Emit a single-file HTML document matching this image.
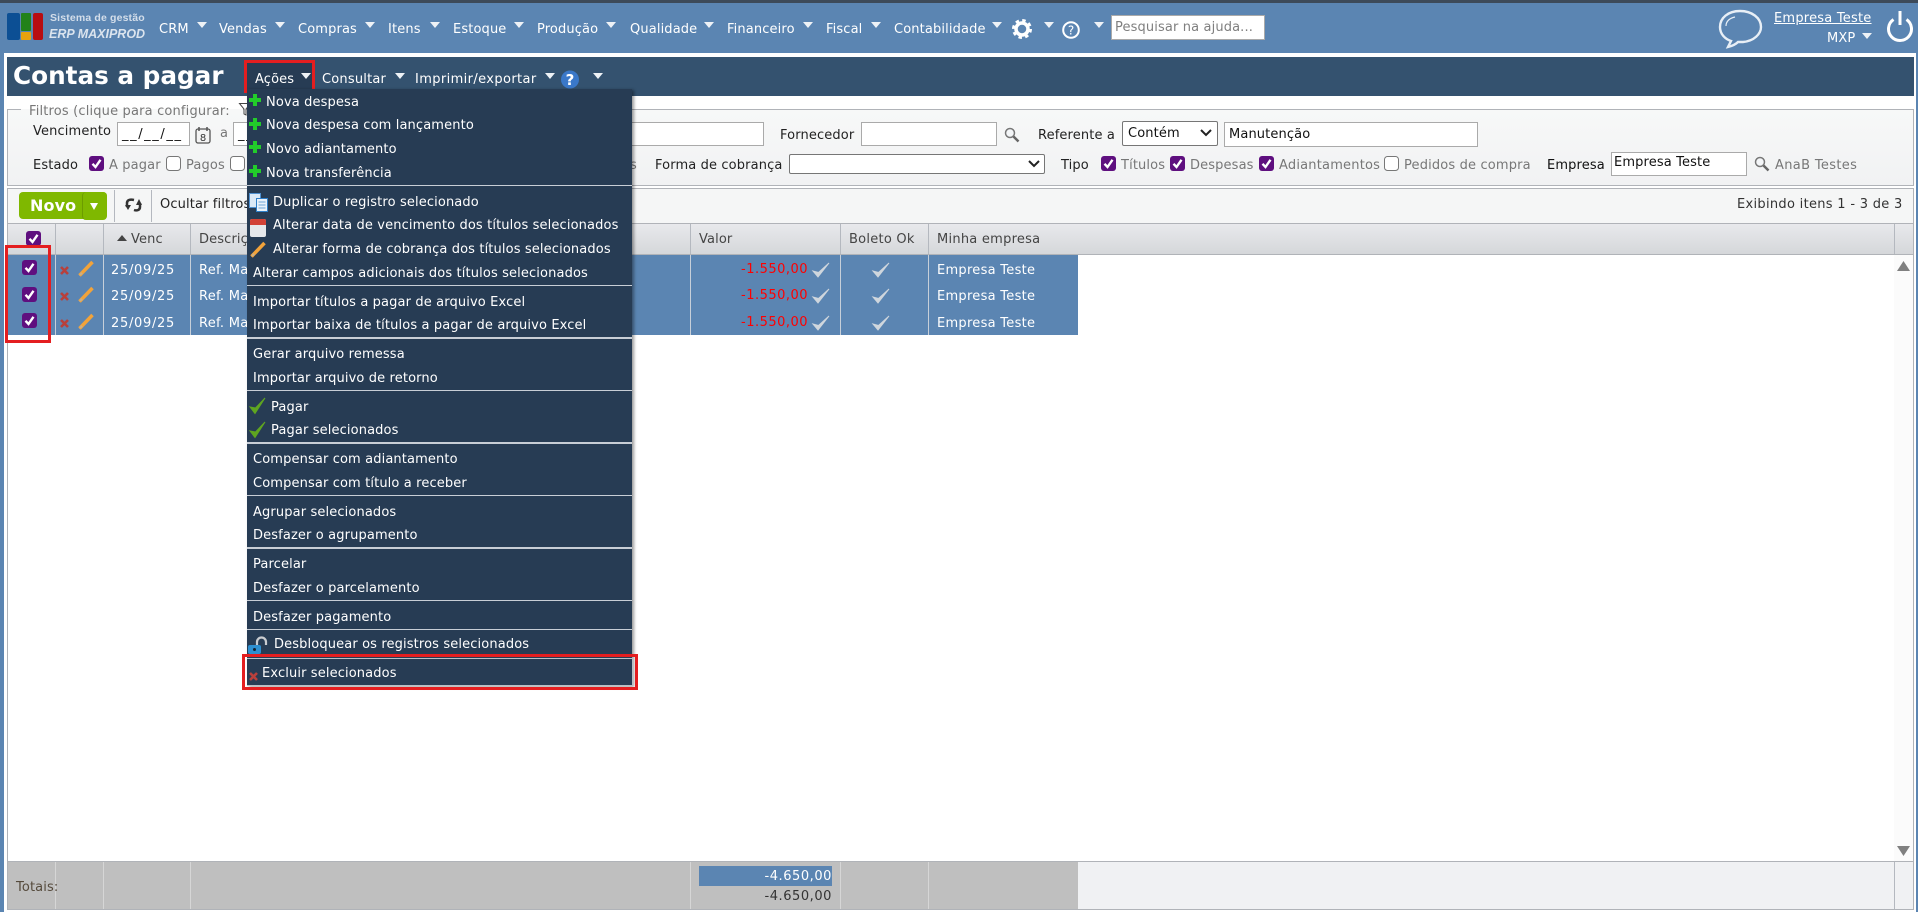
<!DOCTYPE html>
<html lang="pt"><head><meta charset="utf-8"><title>Contas a pagar</title>
<style>
html,body{margin:0;padding:0}
body{position:relative;width:1918px;height:912px;overflow:hidden;background:#fff;font:13px/16px "DejaVu Sans","Liberation Sans",sans-serif;color:#222}
.t{position:absolute;white-space:nowrap;line-height:16px;letter-spacing:.13px;margin-top:2px}
.b{position:absolute;box-sizing:border-box}
.c{position:absolute;width:0;height:0;border-left:5px solid transparent;border-right:5px solid transparent;border-top:6px solid #eef2f6}
.n{color:#fff}
.g{color:#777}
.m{color:#fff}
.i{background:#fff;border:1px solid #aaa;color:#111;padding-left:4px;line-height:24px;white-space:nowrap;letter-spacing:.13px}
svg{position:absolute;overflow:visible}
.sep{position:absolute;left:247px;width:385px;background:#c8ced6;height:1px}
.s2{height:2px}
.vl{position:absolute;width:1px;background:#b4b8bf}
.rv{position:absolute;width:1px;background:#c7cfd9}
.fv{position:absolute;width:1px;background:#d6d6d6;top:862px;height:47px}
.r{color:#fff;letter-spacing:.28px}
.d{letter-spacing:.7px}
.red{color:#f00;letter-spacing:.5px}
.dt{letter-spacing:1.6px}
</style></head><body>
<svg width="0" height="0" style="position:absolute"><defs>
<g id="ck"><rect x="0" y="0" width="15" height="15" rx="3" fill="#5f0f7f"/><path d="M3.5 7.8l3 3.2 5-7.2" fill="none" stroke="#fff" stroke-width="2.4"/></g>
<g id="un"><rect x=".5" y=".5" width="14" height="14" rx="3" fill="#fff" stroke="#777"/></g>
<g id="pc"><path d="M1.5 14.5L14.5 1" fill="none" stroke="#f2a33a" stroke-width="3.500"/><path d="M1 15l2-4 2 2z" fill="#c9b08a"/></g>
<g id="x"><path d="M1 1l7 7M8 1l-7 7" stroke="#b8403c" stroke-width="2.6" fill="none"/></g>
<g id="ok"><path d="M1 9l5 6L17 1 6.5 10.500z" fill="#cfd6dd" stroke="#cfd6dd" stroke-width="1"/></g>
<g id="gk"><path d="M1 9l5 6.500L16 0 6.500 10z" fill="#5fa520" stroke="#5fa520" stroke-width="1"/></g>
<g id="pl"><path d="M6 0v12M0 6h12" stroke="#22cc2a" stroke-width="4" fill="none"/></g>
<g id="se"><circle cx="6" cy="6" r="4.500" fill="#f4f6f8" stroke="#777" stroke-width="1.500"/><path d="M9.500 9.500l5 5" stroke="#666" stroke-width="2.500"/></g>
<path id="ch" d="M0 0l5 5 5-5" fill="none" stroke="#222" stroke-width="2"/>
</defs></svg>

<!-- header -->
<div class="b" style="left:0;top:0;width:1918px;height:3px;background:#3d4a59"></div>
<div class="b" style="left:0;top:3px;width:1918px;height:909px;background:#5b85b2"></div>
<div class="b" style="left:4px;top:53px;width:1912px;height:859px;background:#fff"></div>

<svg style="left:7px;top:13px" width="37" height="28"><rect x="0" y="0" width="13" height="27" rx="2" fill="#0c4f94"/><rect x="14" y="0" width="10" height="18" rx="1" fill="#22821a"/><rect x="14" y="19" width="10" height="8" rx="1" fill="#e8a20f"/><rect x="26" y="0" width="10" height="27" rx="2" fill="#b80d12"/></svg>
<div class="t" style="left:50px;top:8px;font:bold 10.500px/16px 'Liberation Sans',sans-serif;color:#d4deea;letter-spacing:.15px">Sistema de gestão</div>
<div class="t" style="left:49px;top:24px;font:italic bold 12.500px/16px 'Liberation Sans',sans-serif;color:#dbe4ee;letter-spacing:0">ERP MAXIPROD</div>

<div class="t n" style="left:159px;top:20px">CRM</div><div class="c" style="left:197px;top:22px"></div>
<div class="t n" style="left:219px;top:20px">Vendas</div><div class="c" style="left:275px;top:22px"></div>
<div class="t n" style="left:298px;top:20px">Compras</div><div class="c" style="left:365px;top:22px"></div>
<div class="t n" style="left:388px;top:20px">Itens</div><div class="c" style="left:430px;top:22px"></div>
<div class="t n" style="left:453px;top:20px">Estoque</div><div class="c" style="left:514px;top:22px"></div>
<div class="t n" style="left:537px;top:20px">Produção</div><div class="c" style="left:606px;top:22px"></div>
<div class="t n" style="left:630px;top:20px">Qualidade</div><div class="c" style="left:704px;top:22px"></div>
<div class="t n" style="left:727px;top:20px">Financeiro</div><div class="c" style="left:803px;top:22px"></div>
<div class="t n" style="left:826px;top:20px">Fiscal</div><div class="c" style="left:871px;top:22px"></div>
<div class="t n" style="left:894px;top:20px">Contabilidade</div><div class="c" style="left:992px;top:22px"></div>
<svg style="left:1012px;top:19px" width="20" height="20"><circle cx="10" cy="10" r="6" fill="none" stroke="#fff" stroke-width="3.500"/><circle cx="10" cy="10" r="8.500" fill="none" stroke="#fff" stroke-width="3" stroke-dasharray="3.400 3.270"/></svg>
<div class="c" style="left:1044px;top:22px"></div>
<svg style="left:1062px;top:21px" width="18" height="18"><circle cx="9" cy="9" r="7.800" fill="none" stroke="#fff" stroke-width="2"/><text x="9" y="13.500" font-family="DejaVu Sans" font-size="12" fill="#fff" text-anchor="middle">?</text></svg>
<div class="c" style="left:1094px;top:22px"></div>
<div class="b i" style="left:1111px;top:15px;width:154px;height:25px;padding-left:3px;color:#7f7f7f">Pesquisar na ajuda...</div>

<svg style="left:1718px;top:9px" width="45" height="40"><path d="M22 2C10 2 2 9 2 18c0 7 5 12 11 14-1 2-2 4-3 6 4-1 8-3 10-5 2 0 3 0 5 0 11-1 18-8 18-15C43 9 34 2 22 2z" fill="none" stroke="#e8eff6" stroke-width="2.400"/><path d="M8 17c0-5 4-8 9-9" fill="none" stroke="#e8eff6" stroke-width="1.200"/></svg>
<div class="t n" style="left:1774px;top:9px;text-decoration:underline;letter-spacing:.22px">Empresa Teste</div>
<div class="t n" style="left:1827px;top:29px">MXP</div><div class="c" style="left:1862px;top:33px"></div>
<svg style="left:1886px;top:11px" width="28" height="29"><path d="M7.500 8.500a11.500 11.500 0 1 0 13 0" fill="none" stroke="#fff" stroke-width="3"/><path d="M14 0v14" stroke="#fff" stroke-width="3"/></svg>

<!-- title bar -->
<div class="b" style="left:7px;top:57px;width:1907px;height:39px;background:#34526f"></div>
<div class="t" style="left:13px;top:61px;margin:0;letter-spacing:0;font:bold 24.700px/30px 'DejaVu Sans',sans-serif;color:#fff">Contas a pagar</div>
<div class="b" style="left:244px;top:60px;width:71px;height:33px;background:#273c54;border:3px solid #e41e20"></div>
<div class="t n" style="left:255px;top:70px">Ações</div><div class="c" style="left:301px;top:73px"></div>
<div class="t n" style="left:322px;top:70px;letter-spacing:.2px">Consultar</div><div class="c" style="left:395px;top:73px"></div>
<div class="t n" style="left:415px;top:70px;letter-spacing:.38px">Imprimir/exportar</div><div class="c" style="left:545px;top:73px"></div>
<svg style="left:560px;top:70px" width="20" height="19"><circle cx="10" cy="9.500" r="9" fill="#3a78c9"/><text x="10" y="15" font-family="DejaVu Sans" font-weight="bold" font-size="15" fill="#fff" text-anchor="middle">?</text></svg>
<div class="c" style="left:593px;top:73px"></div>

<!-- filters -->
<div class="b" style="left:7px;top:109px;width:1907px;height:77px;border:1px solid #b0b3b8;background:linear-gradient(#f7f8f8,#f1f2f3)"></div>
<div class="b" style="left:21px;top:105px;width:222px;height:8px;background:linear-gradient(#fff 50%,#f7f8f8 50%)"></div>
<div class="t g" style="left:29px;top:102px;letter-spacing:.17px">Filtros (clique para configurar:</div>
<svg style="left:239px;top:103px" width="12" height="13"><path d="M.5.500h11L7 6v6L5 11V6z" fill="#fff" stroke="#444"/></svg>
<div class="t" style="left:33px;top:122px">Vencimento</div>
<div class="b i dt" style="left:117px;top:122px;width:73px;height:24px">__/__/__</div>
<svg style="left:195px;top:127px" width="16" height="17"><rect x="1" y="2" width="14" height="14" rx="2" fill="#f3f3f3" stroke="#555" stroke-width="1.300"/><path d="M4 0v4M12 0v4" stroke="#555" stroke-width="1.500"/><text x="8" y="14" font-size="10" font-family="DejaVu Sans" fill="#333" text-anchor="middle">8</text></svg>
<div class="t g" style="left:220px;top:124px">a</div>
<div class="b i dt" style="left:233px;top:122px;width:531px;height:24px">__/__/__</div>
<div class="t" style="left:780px;top:126px">Fornecedor</div>
<div class="b i" style="left:861px;top:122px;width:136px;height:24px"></div>
<svg style="left:1004px;top:127px" width="16" height="16"><use href="#se"/></svg>
<div class="t" style="left:1038px;top:126px">Referente a</div>
<div class="b" style="left:1122px;top:121px;width:96px;height:25px;background:#fff;border:1px solid #767676;border-radius:2px;padding-left:5px;line-height:24px;color:#111;letter-spacing:.13px">Contém</div>
<svg style="left:1201px;top:130px" width="11" height="7"><use href="#ch"/></svg>
<div class="b i" style="left:1224px;top:122px;width:254px;height:25px">Manutenção</div>

<div class="t" style="left:33px;top:156px">Estado</div>
<svg style="left:89px;top:156px" width="15" height="15"><use href="#ck"/></svg>
<div class="t g" style="left:109px;top:156px">A pagar</div>
<svg style="left:166px;top:156px" width="15" height="15"><use href="#un"/></svg>
<div class="t g" style="left:186px;top:156px">Pagos</div>
<svg style="left:230px;top:156px" width="15" height="15"><use href="#un"/></svg>
<div class="t g" style="left:630px;top:156px">s</div>
<div class="t" style="left:655px;top:156px">Forma de cobrança</div>
<div class="b" style="left:789px;top:154px;width:256px;height:20px;background:#fff;border:1px solid #767676;border-radius:2px"></div>
<svg style="left:1029px;top:161px" width="11" height="7"><use href="#ch"/></svg>
<div class="t" style="left:1061px;top:156px">Tipo</div>
<svg style="left:1101px;top:156px" width="15" height="15"><use href="#ck"/></svg>
<div class="t g" style="left:1121px;top:156px">Títulos</div>
<svg style="left:1170px;top:156px" width="15" height="15"><use href="#ck"/></svg>
<div class="t g" style="left:1190px;top:156px">Despesas</div>
<svg style="left:1259px;top:156px" width="15" height="15"><use href="#ck"/></svg>
<div class="t g" style="left:1279px;top:156px;letter-spacing:.2px">Adiantamentos</div>
<svg style="left:1384px;top:156px" width="15" height="15"><use href="#un"/></svg>
<div class="t g" style="left:1404px;top:156px;letter-spacing:.16px">Pedidos de compra</div>
<div class="t" style="left:1547px;top:156px;color:#111">Empresa</div>
<div class="b i" style="left:1611px;top:152px;width:136px;height:24px;padding-left:2px;line-height:20px">Empresa Teste</div>
<svg style="left:1754px;top:156px" width="16" height="16"><use href="#se"/></svg>
<div class="t g" style="left:1775px;top:156px;letter-spacing:.34px">AnaB Testes</div>

<!-- toolbar -->
<div class="b" style="left:7px;top:188px;width:1907px;height:36px;border:1px solid #b0b3b8;border-bottom:0;background:#f5f6f6"></div>
<div class="b" style="left:19px;top:192px;width:88px;height:27px;background:#7fb800;border-radius:4px"></div>
<div class="b" style="left:82px;top:192px;width:25px;height:28px;background:#7fb800;border-left:1px solid #6c9c00;border-radius:4px"></div>
<div class="t" style="left:30px;top:197px;margin:0;letter-spacing:.1px;font:bold 16px/18px 'DejaVu Sans',sans-serif;color:#fff">Novo</div>
<div class="c" style="left:90px;top:203px;border-left-width:4px;border-right-width:4px;border-top:7px solid #fff"></div>
<div class="vl" style="left:114px;top:190px;height:32px"></div><div class="vl" style="left:151px;top:190px;height:32px"></div>
<svg style="left:125px;top:197px" width="18" height="16"><path d="M2 10V6c0-3 3-4 7-3" fill="none" stroke="#333" stroke-width="2.500"/><path d="M0 8h6l-3 5z" fill="#333"/><path d="M15 6v4c0 3-3 4-6 3" fill="none" stroke="#333" stroke-width="2.500"/><path d="M11 8h6l-3-6z" fill="#333"/></svg>
<div class="t" style="left:160px;top:195px">Ocultar filtros</div>
<div class="t" style="left:1737px;top:195px;color:#333;letter-spacing:.3px">Exibindo itens 1 - 3 de 3</div>

<!-- table head -->
<div class="b" style="left:7px;top:223px;width:1907px;height:32px;background:linear-gradient(#e8e9ec,#d5d7da);border:1px solid #b0b3b8;border-width:1px 1px 1px 1px"></div>
<div class="vl" style="left:55px;top:224px;height:30px"></div><div class="vl" style="left:103px;top:224px;height:30px"></div><div class="vl" style="left:190px;top:224px;height:30px"></div><div class="vl" style="left:690px;top:224px;height:30px"></div><div class="vl" style="left:840px;top:224px;height:30px"></div><div class="vl" style="left:928px;top:224px;height:30px"></div><div class="vl" style="left:1894px;top:224px;height:30px"></div>
<svg style="left:26px;top:231px" width="15" height="15"><use href="#ck"/></svg>
<svg style="left:117px;top:235px" width="10" height="6"><path d="M0 6l5-6 5 6z" fill="#444"/></svg>
<div class="t" style="left:131px;top:230px;color:#444">Venc</div>
<div class="t" style="left:199px;top:230px;color:#444">Descrição</div>
<div class="t" style="left:699px;top:230px;color:#444">Valor</div>
<div class="t" style="left:849px;top:230px;color:#444;letter-spacing:.25px">Boleto Ok</div>
<div class="t" style="left:937px;top:230px;color:#444;letter-spacing:.25px">Minha empresa</div>

<!-- rows -->
<div class="b" style="left:7px;top:255px;width:1px;height:606px;background:#b0b3b8"></div>
<div class="b" style="left:1913px;top:255px;width:1px;height:654px;background:#b0b3b8"></div>
<div class="b" style="left:8px;top:255px;width:1070px;height:80px;background:#5b85b2"></div>
<div class="rv" style="left:55px;top:255px;height:80px"></div><div class="rv" style="left:103px;top:255px;height:80px"></div><div class="rv" style="left:190px;top:255px;height:80px"></div><div class="rv" style="left:690px;top:255px;height:80px"></div><div class="rv" style="left:840px;top:255px;height:80px"></div><div class="rv" style="left:928px;top:255px;height:80px"></div>
<div class="b" style="left:1894px;top:255px;width:19px;height:606px;background:#fbfbfb"></div>
<svg style="left:1897px;top:261px" width="13" height="10"><path d="M0 10L6.500 0 13 10z" fill="#808080"/></svg>
<svg style="left:1897px;top:846px" width="13" height="10"><path d="M0 0h13L6.500 10z" fill="#808080"/></svg>

<svg style="left:22px;top:260px" width="15" height="15"><use href="#ck"/></svg>
<svg style="left:60px;top:266px" width="9" height="9"><use href="#x"/></svg>
<svg style="left:78px;top:261px" width="16" height="16"><use href="#pc"/></svg>
<div class="t r d" style="left:111px;top:261px">25/09/25</div>
<div class="t r" style="left:199px;top:261px">Ref. Manutenção</div>
<div class="t red" style="left:741px;top:260px">-1.550,00</div>
<svg style="left:812px;top:262px" width="18" height="16"><use href="#ok"/></svg>
<svg style="left:872px;top:262px" width="18" height="16"><use href="#ok"/></svg>
<div class="t r" style="left:937px;top:261px">Empresa Teste</div>

<svg style="left:22px;top:287px" width="15" height="15"><use href="#ck"/></svg>
<svg style="left:60px;top:292px" width="9" height="9"><use href="#x"/></svg>
<svg style="left:78px;top:287px" width="16" height="16"><use href="#pc"/></svg>
<div class="t r d" style="left:111px;top:287px">25/09/25</div>
<div class="t r" style="left:199px;top:287px">Ref. Manutenção</div>
<div class="t red" style="left:741px;top:286px">-1.550,00</div>
<svg style="left:812px;top:288px" width="18" height="16"><use href="#ok"/></svg>
<svg style="left:872px;top:288px" width="18" height="16"><use href="#ok"/></svg>
<div class="t r" style="left:937px;top:287px">Empresa Teste</div>

<svg style="left:22px;top:313px" width="15" height="15"><use href="#ck"/></svg>
<svg style="left:60px;top:319px" width="9" height="9"><use href="#x"/></svg>
<svg style="left:78px;top:314px" width="16" height="16"><use href="#pc"/></svg>
<div class="t r d" style="left:111px;top:314px">25/09/25</div>
<div class="t r" style="left:199px;top:314px">Ref. Manutenção</div>
<div class="t red" style="left:741px;top:313px">-1.550,00</div>
<svg style="left:812px;top:315px" width="18" height="16"><use href="#ok"/></svg>
<svg style="left:872px;top:315px" width="18" height="16"><use href="#ok"/></svg>
<div class="t r" style="left:937px;top:314px">Empresa Teste</div>

<div class="b" style="left:5px;top:245px;width:46px;height:98px;border:3px solid #e41e20"></div>

<!-- totals -->
<div class="b" style="left:7px;top:861px;width:1907px;height:49px;background:#f0f1f3;border:1px solid #b0b3b8"></div>
<div class="b" style="left:8px;top:862px;width:1070px;height:47px;background:#bfbfbf"></div>
<div class="fv" style="left:55px"></div><div class="fv" style="left:103px"></div><div class="fv" style="left:190px"></div><div class="fv" style="left:690px"></div><div class="fv" style="left:840px"></div><div class="fv" style="left:928px"></div>
<div class="vl" style="left:1894px;top:862px;height:47px"></div>
<div class="t" style="left:16px;top:878px;color:#554a3c">Totais:</div>
<div class="b" style="left:699px;top:866px;width:133px;height:20px;background:#5b85b2"></div>
<div class="t r" style="right:1086px;top:867px;letter-spacing:.55px">-4.650,00</div>
<div class="t" style="right:1086px;top:887px;color:#333;letter-spacing:.55px">-4.650,00</div>

<!-- menu -->
<div class="b" style="left:247px;top:89px;width:385px;height:597px;background:#273c54;box-shadow:2px 1px 3px rgba(0,0,0,.4)"></div>
<svg style="left:249px;top:94px" width="12" height="12"><use href="#pl"/></svg>
<div class="t m" style="left:266px;top:93px">Nova despesa</div>
<svg style="left:249px;top:118px" width="12" height="12"><use href="#pl"/></svg>
<div class="t m" style="left:266px;top:116px">Nova despesa com lançamento</div>
<svg style="left:249px;top:141px" width="12" height="12"><use href="#pl"/></svg>
<div class="t m" style="left:266px;top:140px">Novo adiantamento</div>
<svg style="left:249px;top:165px" width="12" height="12"><use href="#pl"/></svg>
<div class="t m" style="left:266px;top:164px">Nova transferência</div>
<div class="sep" style="top:185px"></div>
<svg style="left:249px;top:193px" width="19" height="19"><rect x=".5" y=".5" width="11" height="14" fill="#dbe9f6" stroke="#4f90cf"/><rect x="7.500" y="5.500" width="11" height="13" fill="#eaf2fa" stroke="#2f7fc8"/><path d="M9.500 9h7M9.500 12h7M9.500 15h7" stroke="#6ea6d8"/></svg>
<div class="t m" style="left:273px;top:193px">Duplicar o registro selecionado</div>
<svg style="left:250px;top:217px" width="17" height="21"><rect x="0" y="2" width="16" height="18" rx="2" fill="#e6e8ea"/><path d="M0 4a2 2 0 0 1 2-2h12a2 2 0 0 1 2 2v4H0z" fill="#d24236"/></svg>
<div class="t m" style="left:273px;top:216px">Alterar data de vencimento dos títulos selecionados</div>
<svg style="left:250px;top:242px" width="17" height="16"><use href="#pc"/></svg>
<div class="t m" style="left:273px;top:240px">Alterar forma de cobrança dos títulos selecionados</div>
<div class="t m" style="left:253px;top:264px">Alterar campos adicionais dos títulos selecionados</div>
<div class="sep" style="top:285px"></div>
<div class="t m" style="left:253px;top:293px">Importar títulos a pagar de arquivo Excel</div>
<div class="t m" style="left:253px;top:316px">Importar baixa de títulos a pagar de arquivo Excel</div>
<div class="sep s2" style="top:337px"></div>
<div class="t m" style="left:253px;top:345px">Gerar arquivo remessa</div>
<div class="t m" style="left:253px;top:369px">Importar arquivo de retorno</div>
<div class="sep" style="top:390px"></div>
<svg style="left:249px;top:398px" width="17" height="16"><use href="#gk"/></svg>
<div class="t m" style="left:271px;top:398px">Pagar</div>
<svg style="left:249px;top:422px" width="17" height="16"><use href="#gk"/></svg>
<div class="t m" style="left:271px;top:421px">Pagar selecionados</div>
<div class="sep s2" style="top:442px"></div>
<div class="t m" style="left:253px;top:450px">Compensar com adiantamento</div>
<div class="t m" style="left:253px;top:474px">Compensar com título a receber</div>
<div class="sep" style="top:495px"></div>
<div class="t m" style="left:253px;top:503px">Agrupar selecionados</div>
<div class="t m" style="left:253px;top:526px">Desfazer o agrupamento</div>
<div class="sep s2" style="top:547px"></div>
<div class="t m" style="left:253px;top:555px">Parcelar</div>
<div class="t m" style="left:253px;top:579px">Desfazer o parcelamento</div>
<div class="sep" style="top:600px"></div>
<div class="t m" style="left:253px;top:608px">Desfazer pagamento</div>
<div class="sep" style="top:629px"></div>
<svg style="left:247px;top:637px" width="21" height="18"><path d="M10 8V5a4.500 4.500 0 0 1 9 0v3" fill="none" stroke="#c9ccd0" stroke-width="2.200"/><rect x="1" y="8" width="13" height="9" rx="2" fill="#2d8fd0"/><circle cx="7.500" cy="12.500" r="1.500" fill="#123"/></svg>
<div class="t m" style="left:274px;top:635px">Desbloquear os registros selecionados</div>
<div class="b" style="left:247px;top:658px;width:386px;height:28px;border:1px solid #b8bec6;border-left:0;border-top:1px solid #b8bec6"></div>
<svg style="left:249px;top:672px" width="9" height="9"><use href="#x"/></svg>
<div class="t m" style="left:262px;top:664px">Excluir selecionados</div>
<div class="b" style="left:242px;top:654px;width:396px;height:36px;border:3px solid #e41e20"></div>
</body></html>
